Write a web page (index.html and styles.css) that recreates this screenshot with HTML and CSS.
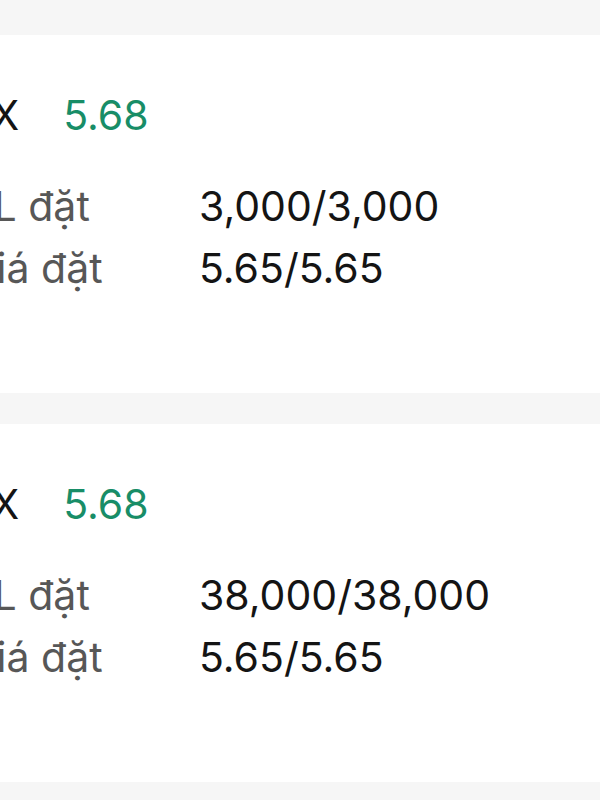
FILE: index.html
```html
<!DOCTYPE html>
<html lang="vi">
<head>
  <meta charset="UTF-8" />
  <meta name="viewport" content="width=device-width, initial-scale=1.0" />
  <title>Lệnh đặt</title>
  <link rel="stylesheet" href="styles.css">
</head>
<body>
  <div class="orders">
    <div class="order">
      <div class="order-head">
        <span class="symbol">VIX</span>
        <span class="price">5.68</span>
      </div>
      <div class="order-info">
        <span class="label">KL đặt</span>
        <span class="value">3,000/3,000</span>
        <span class="label">Giá đặt</span>
        <span class="value">5.65/5.65</span>
      </div>
    </div>

    <div class="order">
      <div class="order-head">
        <span class="symbol">VIX</span>
        <span class="price">5.68</span>
      </div>
      <div class="order-info">
        <span class="label">KL đặt</span>
        <span class="value">38,000/38,000</span>
        <span class="label">Giá đặt</span>
        <span class="value">5.65/5.65</span>
      </div>
    </div>
  </div>
</body>
</html>
```

FILE: styles.css
```css
:root {
  --bg: #f6f6f6;
  --card-bg: #ffffff;
  --text: #141414;
  --muted: #575757;
  --up: #188d67;
}

html,
body {
  margin: 0;
  height: 100%;
  overflow: hidden;
}

body {
  font-family: Inter, "Liberation Sans", Arial, sans-serif;
  background: var(--bg);
  color: var(--text);
}

.orders {
  display: flex;
  flex-direction: column;
  gap: 31px;
  padding-top: 35px;
  margin-left: -34px;
}

.order {
  background: var(--card-bg);
  padding: 55px 0 94px;
}

.order-head {
  display: flex;
  align-items: baseline;
  gap: 44px;
  margin-left: -14px;
  font-size: 41px;
  line-height: 50px;
}

.price {
  color: var(--up);
}

.order-info {
  display: grid;
  grid-template-columns: 233px 1fr;
  margin-top: 35px;
  font-size: 41px;
  line-height: 62px;
}

.label {
  color: var(--muted);
}

.value {
  color: var(--text);
}
```
